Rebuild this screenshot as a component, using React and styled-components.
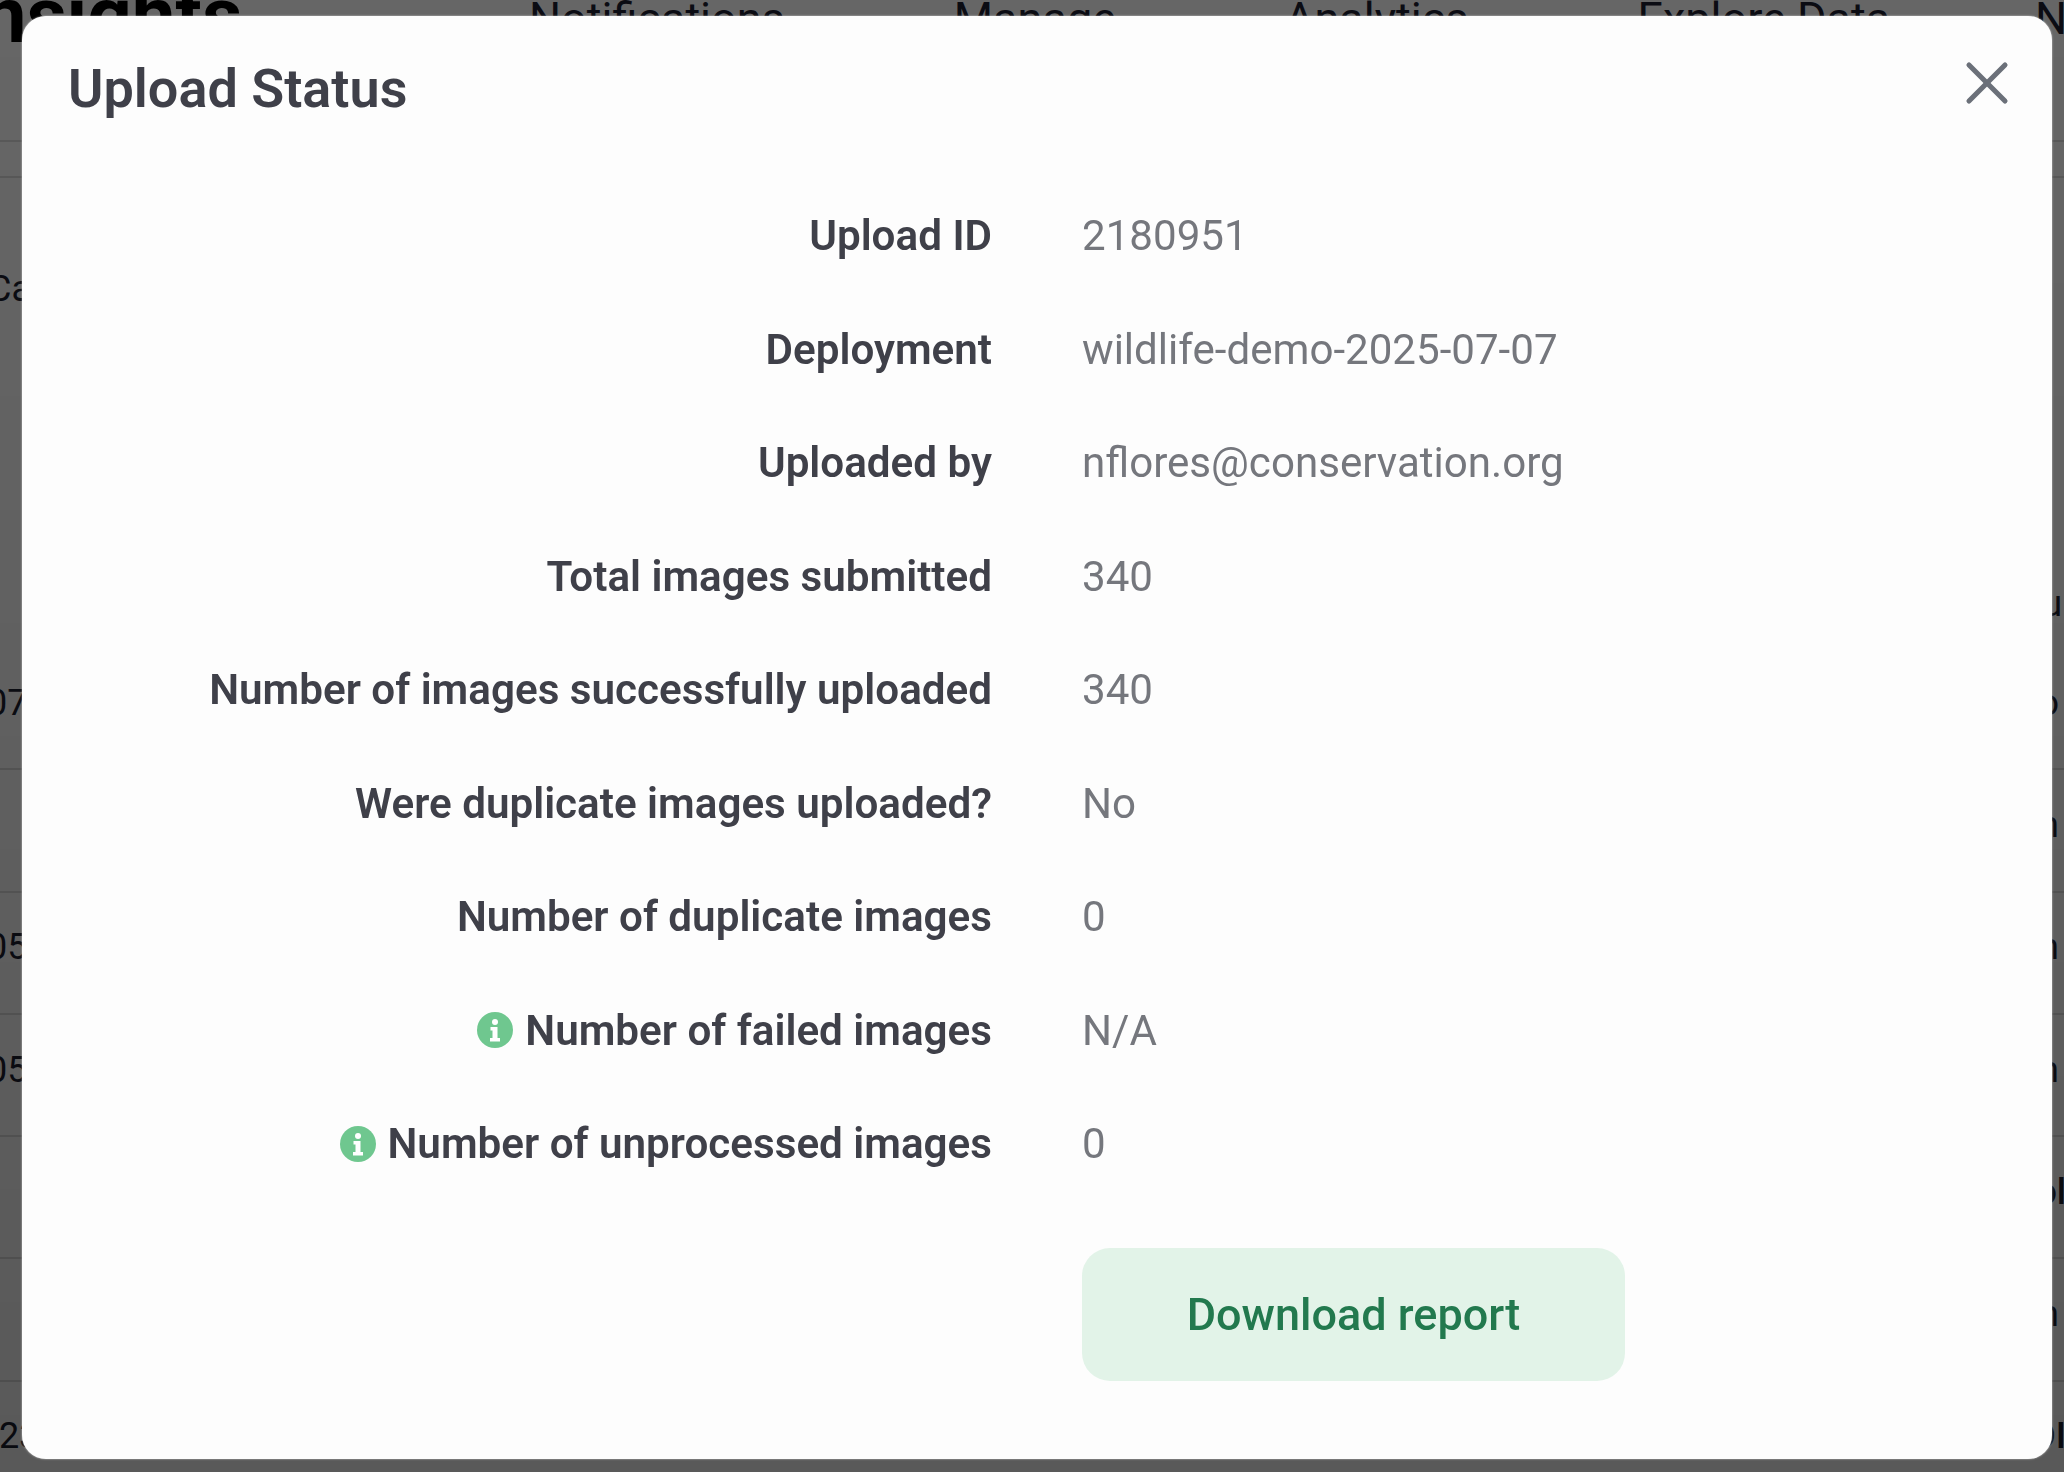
import React from 'react';
import styled, { createGlobalStyle } from 'styled-components';
import { X } from 'lucide-react';

const rows = [
  { label: 'Upload ID', value: '2180951' },
  { label: 'Deployment', value: 'wildlife-demo-2025-07-07' },
  { label: 'Uploaded by', value: 'nflores@conservation.org' },
  { label: 'Total images submitted', value: '340' },
  { label: 'Number of images successfully uploaded', value: '340' },
  { label: 'Were duplicate images uploaded?', value: 'No' },
  { label: 'Number of duplicate images', value: '0' },
  { label: 'Number of failed images', value: 'N/A', info: true },
  { label: 'Number of unprocessed images', value: '0', info: true },
];

const tableRows = [
  { left: '07', right: 'ro' },
  { left: '', right: 'n' },
  { left: '05', right: 'n' },
  { left: '05', right: 'n' },
  { left: '', right: 'ol', strong: true },
  { left: '', right: 'n' },
  { left: '23', right: 'DI', strong: true, flush: true },
];

function InfoIcon() {
  return (
    <InfoSvg viewBox="0 0 36 36">
      <circle cx="18" cy="18" r="18" fill="#6fc78f" />
      <circle cx="18" cy="10" r="3" fill="#fff" />
      <path d="M13.5 15h7v11h2.5v3.5H13v-3.5h2.5v-7.5h-2z" fill="#fff" />
    </InfoSvg>
  );
}

function App() {
  return (
    <>
      <GlobalStyle />
      <Page>
        <PageHeader>
          <PageTitle>Insights</PageTitle>
          <PageTabs>
            <PageTab>Notifications</PageTab>
            <PageTab>Manage</PageTab>
            <PageTab>Analytics</PageTab>
            <PageTab>Explore Data</PageTab>
          </PageTabs>
          <PageTab>N</PageTab>
        </PageHeader>
        <Divider />
        <Divider />
        <SectionRow>
          <span>Ca</span>
        </SectionRow>
        <HeadRow>
          <span />
          <RightText $end={2}>u</RightText>
        </HeadRow>
        {tableRows.map((row, i) => (
          <TableRow key={i}>
            <LeftText $flush={row.flush}>{row.left}</LeftText>
            <RightText $strong={row.strong} $end={row.strong ? -2 : 5}>
              {row.right}
            </RightText>
          </TableRow>
        ))}
      </Page>
      <Backdrop>
        <Modal>
          <ModalHeader>
            <ModalTitle>Upload Status</ModalTitle>
            <CloseButton aria-label="Close">
              <X size={72} strokeWidth={1.7} />
            </CloseButton>
          </ModalHeader>
          <Details>
            {rows.map((row) => (
              <React.Fragment key={row.label}>
                <Label>
                  {row.info && <InfoIcon />}
                  {row.label}
                </Label>
                <Value>{row.value}</Value>
              </React.Fragment>
            ))}
            <ButtonCell>
              <DownloadButton>Download report</DownloadButton>
            </ButtonCell>
          </Details>
        </Modal>
      </Backdrop>
    </>
  );
}

const GlobalStyle = createGlobalStyle`
  html, body {
    margin: 0;
    height: 100%;
    overflow: hidden;
    background: #fff;
    font-family: Roboto, "Liberation Sans", sans-serif;
  }
`;

const Page = styled.div`
  height: 1472px;
  overflow: hidden;
  color: #1c2030;
`;

const PageHeader = styled.div`
  display: flex;
  align-items: flex-start;
  height: 140px;
`;

const PageTitle = styled.div`
  width: 569px;
  margin-left: -40px;
  margin-top: -26px;
  flex: none;
  font-size: 78px;
  font-weight: 700;
  line-height: 84px;
  color: #000;
`;

const PageTabs = styled.div`
  display: flex;
  gap: 169px;
  width: 1506px;
  flex: none;
`;

const PageTab = styled.div`
  margin-top: -7px;
  font-size: 45px;
  line-height: 52px;
`;

const Divider = styled.div`
  height: 2px;
  margin-bottom: 34px;
  background: #ddd;
`;

const SectionRow = styled.div`
  height: 180px;
  margin-left: -12px;
  font-size: 36px;
  line-height: 42px;
  padding-top: 56px;
  box-sizing: border-box;
`;

const HeadRow = styled.div`
  display: flex;
  justify-content: space-between;
  align-items: flex-start;
  height: 256px;
  padding-top: 191px;
  box-sizing: border-box;
  font-size: 36px;
  line-height: 42px;
`;

const TableRow = styled.div`
  display: flex;
  justify-content: space-between;
  align-items: center;
  height: 122.3px;
  box-sizing: border-box;
  padding-bottom: 11px;
  border-bottom: 2px solid #ddd;
  font-size: 36px;
`;

const LeftText = styled.span`
  margin-left: ${(props) => (props.$flush ? '-1px' : '-13px')};
`;

const RightText = styled.span`
  margin-right: ${(props) => props.$end}px;
  font-weight: ${(props) => (props.$strong ? 500 : 400)};
`;

const Backdrop = styled.div`
  position: fixed;
  inset: 0;
  background: linear-gradient(rgba(0, 0, 0, 0.6), rgba(0, 0, 0, 0.65));
  display: flex;
  align-items: flex-start;
  padding: 16px 0 0 22px;
`;

const Modal = styled.div`
  width: 2030px;
  height: 1443px;
  box-sizing: border-box;
  background: #fdfdfd;
  border-radius: 24px;
  padding: 0 46px;
  box-shadow: 0 0 2px rgba(255, 255, 255, 0.7);
`;

const ModalHeader = styled.div`
  display: flex;
  justify-content: space-between;
  align-items: center;
  height: 145px;
`;

const ModalTitle = styled.h2`
  margin: 0;
  font-size: 54px;
  font-weight: 600;
  color: #3f4049;
`;

const CloseButton = styled.button`
  display: flex;
  border: 0;
  padding: 0;
  background: none;
  color: #6b7079;
  margin-right: -17px;
  margin-top: -12px;
`;

const Details = styled.div`
  display: grid;
  grid-template-columns: 924px 1fr;
  column-gap: 90px;
  grid-auto-rows: 113.5px;
  align-items: center;
  margin-top: 18px;
`;

const Label = styled.div`
  display: flex;
  justify-content: flex-end;
  align-items: center;
  gap: 12px;
  font-size: 42.2px;
  font-weight: 600;
  color: #3f4049;
`;

const Value = styled.div`
  font-size: 42.1px;
  color: #75777d;
`;

const InfoSvg = styled.svg`
  width: 36px;
  height: 36px;
  flex: none;
`;

const ButtonCell = styled.div`
  grid-column: 2;
  margin-top: 115px;
`;

const DownloadButton = styled.button`
  width: 543px;
  height: 133px;
  border: 0;
  border-radius: 28px;
  background: #e2f3e8;
  color: #22794e;
  font-family: inherit;
  font-size: 45px;
  font-weight: 500;
`;

export default App;
